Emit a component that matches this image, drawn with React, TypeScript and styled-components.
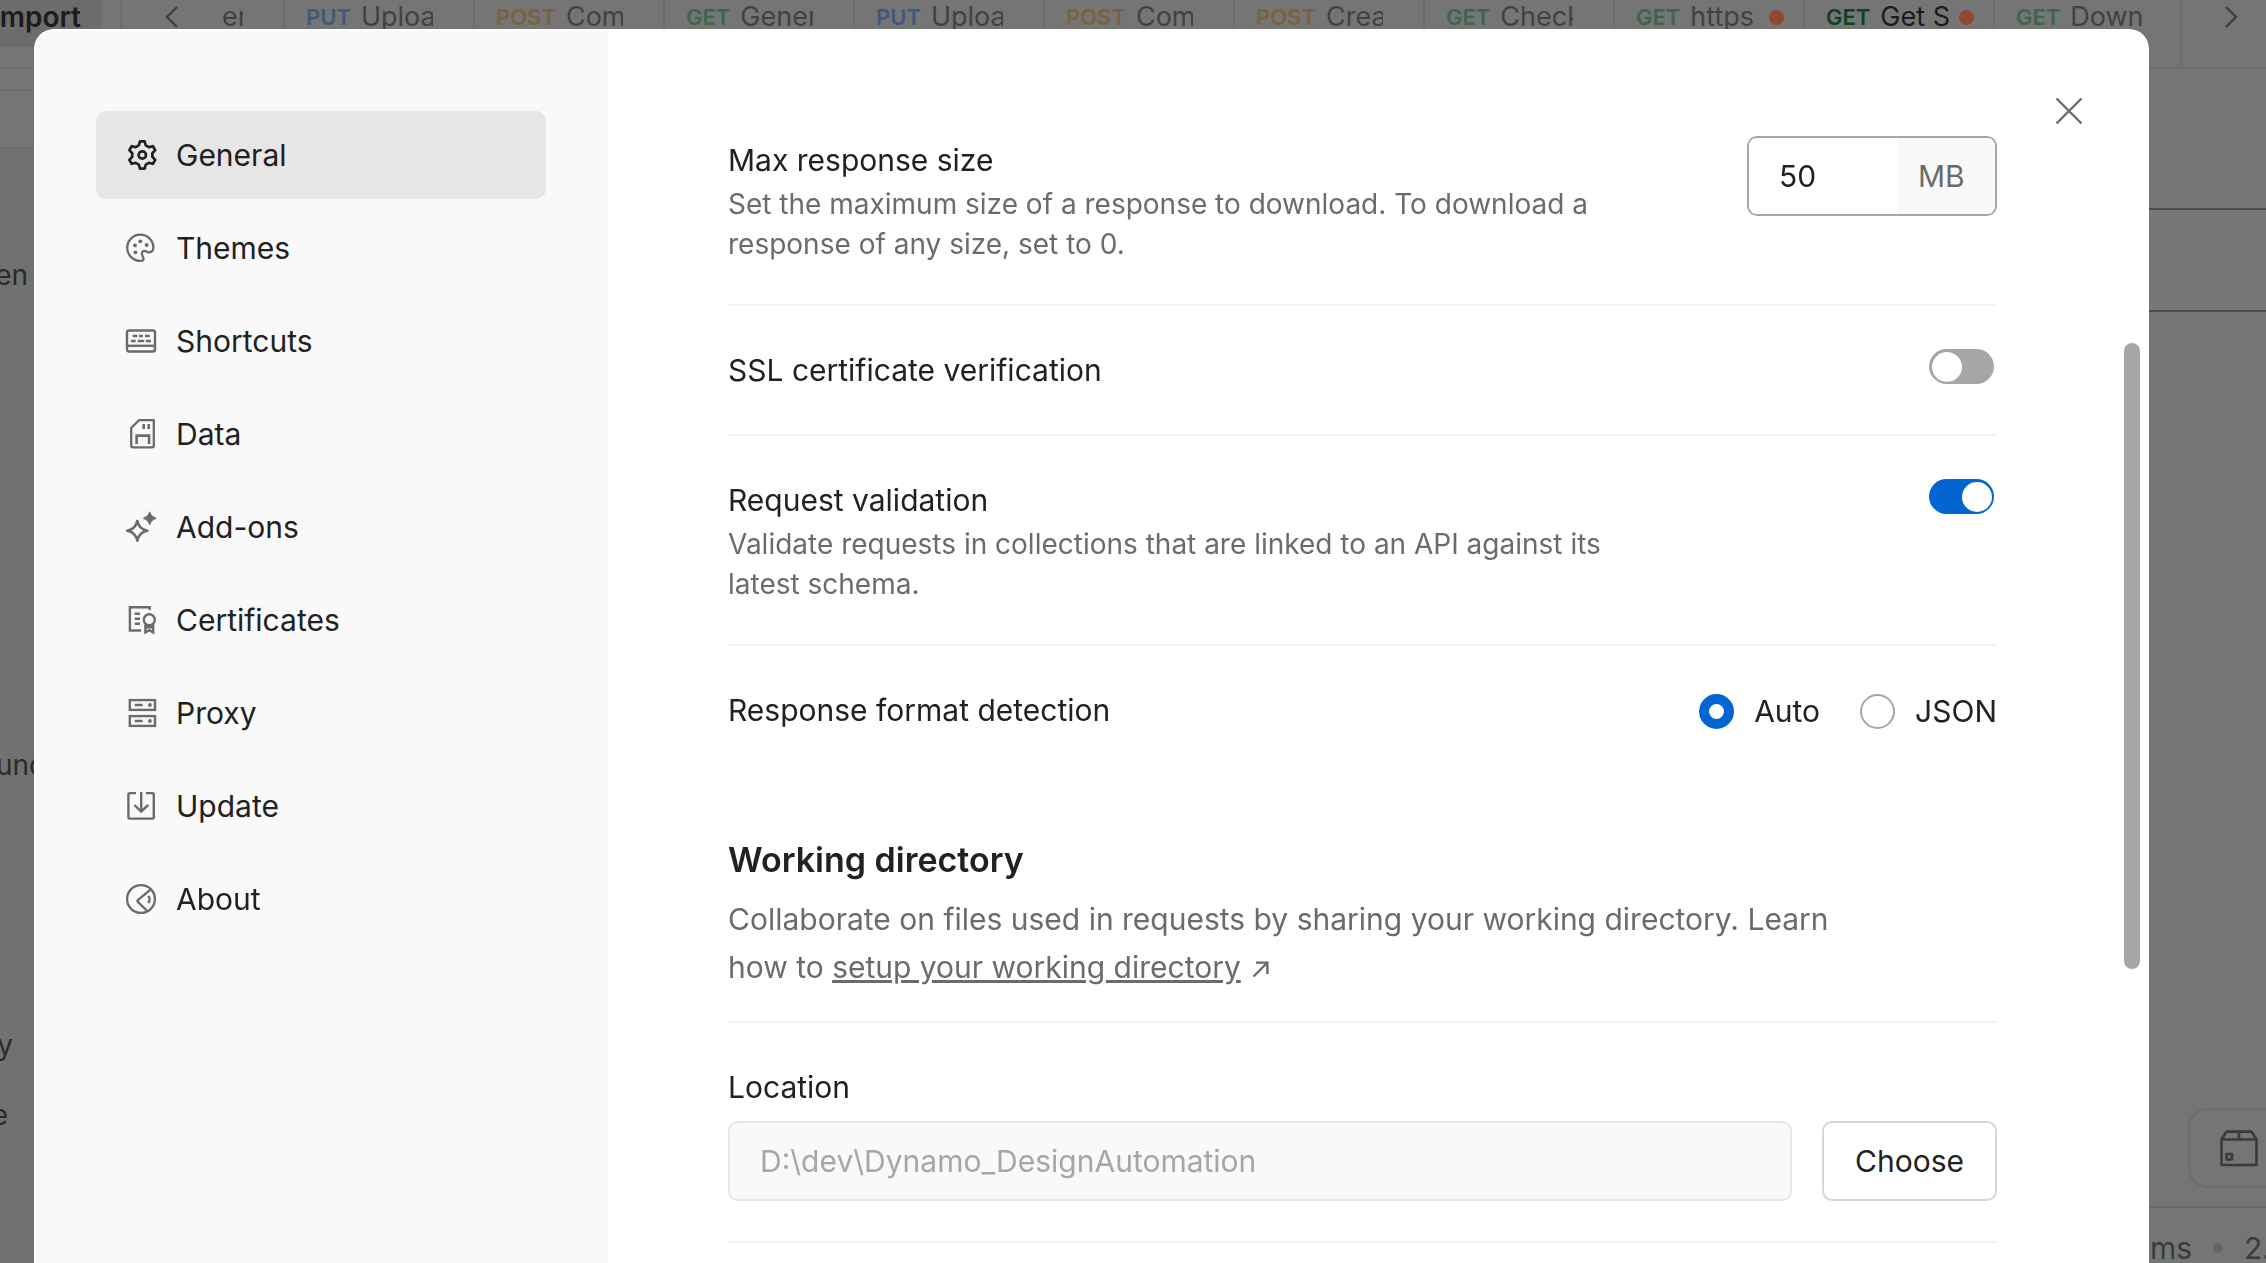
import React, { useState } from "react";
import styled, { createGlobalStyle, css } from "styled-components";

const GlobalStyle = createGlobalStyle`
  *, *::before, *::after { box-sizing: border-box; }
  html, body { margin: 0; height: 100%; overflow: hidden; }
  body, button, input {
    font-family: Inter, "Liberation Sans", sans-serif;
    font-size: 30px;
    line-height: 40px;
    color: #212121;
  }
  body { background: #757575; }
`;

/* ---------- Dimmed workspace behind the dialog ---------- */

const Workspace = styled.div`
  display: grid;
  grid-template-columns: 120px 1fr;
  height: 100vh;
  overflow: hidden;
  background: #757575;
`;

const Explorer = styled.aside`
  display: flex;
  flex-direction: column;
  overflow: hidden;
  background: #717171;
`;

const ExplorerTop = styled.div`
  height: 69px;
  border-bottom: 2px solid #6c6c6c;
  background: #757575;
`;

const ImportButton = styled.button`
  display: flex;
  justify-content: flex-end;
  align-items: flex-start;
  width: 101px;
  height: 47px;
  padding: 0 20px 0 0;
  border: 0;
  background: #6c6c6c;
  color: #1c1c1c;
  font-size: 28px;
  font-weight: 600;
  line-height: 34px;
`;

const Strip = styled.div<{ $height: number }>`
  height: ${(p) => p.$height}px;
  border-bottom: 2px solid #6c6c6c;
  background: #757575;
`;

const ExplorerItem = styled.div<{ $gap: number; $inset: number }>`
  display: flex;
  justify-content: flex-end;
  width: 60px;
  margin-top: ${(p) => p.$gap}px;
  padding-right: ${(p) => p.$inset}px;
  color: #2b2b2b;
  font-size: 28px;
  line-height: 40px;
`;

const Editor = styled.main`
  display: flex;
  flex-direction: column;
  min-width: 0;
`;

const TabBar = styled.div`
  display: flex;
  height: 69px;
  border-left: 2px solid #6c6c6c;
  border-bottom: 2px solid #6c6c6c;
`;

const ScrollButton = styled.button<{ $side: "left" | "right" }>`
  display: flex;
  align-items: flex-start;
  justify-content: center;
  flex: none;
  width: ${(p) => (p.$side === "left" ? 100 : 86)}px;
  padding: 5px 0 0 ${(p) => (p.$side === "left" ? 0 : 14)}px;
  border: 0 solid #6c6c6c;
  border-left-width: ${(p) => (p.$side === "left" ? 0 : 2)}px;
  background: transparent;
`;

const TabStrip = styled.div`
  display: flex;
  flex: 1;
  min-width: 0;
  overflow: hidden;
`;

const Tab = styled.div<{ $short?: boolean }>`
  display: flex;
  align-items: flex-start;
  flex: none;
  width: ${(p) => (p.$short ? 63 : 190)}px;
  padding: 0 40px 0 ${(p) => (p.$short ? 0 : 21)}px;
  border-right: 2px solid #6c6c6c;
  line-height: 34px;
  position: relative;
`;

const methodColors: Record<string, string> = {
  PUT: "#40587a",
  POST: "#77643b",
  GET: "#3f654d",
};

const Method = styled.span<{ $method: string; $active?: boolean }>`
  flex: none;
  margin-right: 10px;
  font-size: 22px;
  font-weight: 600;
  color: ${(p) => (p.$active ? "#0c4322" : methodColors[p.$method])};
`;

const TabName = styled.span<{ $active?: boolean }>`
  flex: 1;
  min-width: 0;
  overflow: hidden;
  white-space: nowrap;
  font-size: 27px;
  color: ${(p) => (p.$active ? "#1c1c1c" : "#424242")};
`;

const UnsavedDot = styled.i`
  position: absolute;
  right: 19px;
  top: 10px;
  width: 15px;
  height: 15px;
  border-radius: 50%;
  background: #90482f;
`;

const UrlField = styled.div`
  height: 104px;
  margin-top: 139px;
  border: solid #4d4d4d;
  border-width: 2px 0;
`;

const EditorFill = styled.div`
  flex: 1;
  display: flex;
  align-items: flex-end;
  justify-content: flex-end;
  padding-bottom: 18px;
`;

const Dock = styled.div`
  width: 78px;
  height: 80px;
  padding: 20px 0 0 30px;
  border: 2px solid #6c6c6c;
  border-right: 0;
  border-radius: 20px 0 0 20px;
`;

const StatusBar = styled.div`
  display: flex;
  align-items: center;
  justify-content: flex-end;
  gap: 21px;
  height: 57px;
  padding-top: 24px;
  border-top: 2px solid #6a6a6a;
  color: #3b3b3b;
  overflow: hidden;
`;

const StatusDot = styled.i`
  width: 10px;
  height: 10px;
  border-radius: 50%;
  background: #666;
`;

const StatusSize = styled.span`
  width: 22px;
  white-space: nowrap;
`;

/* ---------- Dialog ---------- */

const Backdrop = styled.div`
  position: fixed;
  inset: 0;
  display: flex;
  padding: 29px 117px 0 34px;
`;

const Dialog = styled.section`
  position: relative;
  display: flex;
  flex: 1;
  min-width: 0;
  padding: 2px 0 0 2px;
  border-radius: 20px 20px 0 0;
  background: #fff;
  overflow: hidden;
`;

const Sidebar = styled.nav`
  display: flex;
  flex-direction: column;
  gap: 5px;
  flex: none;
  width: 572px;
  padding: 80px 62px 0 60px;
  border-radius: 18px 0 0 0;
  background: #f9f9f9;
`;

const NavItem = styled.button<{ $active: boolean }>`
  display: flex;
  align-items: center;
  gap: 19px;
  height: 88px;
  padding: 0 29px;
  border: 0;
  border-radius: 10px;
  background: ${(p) => (p.$active ? "#e6e6e6" : "transparent")};
  text-align: left;

  svg { color: ${(p) => (p.$active ? "#212121" : "#6b6b6b")}; }
`;

const NavIcon = styled.svg.attrs({
  viewBox: "0 0 32 32",
  fill: "none",
  stroke: "currentColor",
  strokeWidth: 2.7,
  "aria-hidden": true,
})`
  flex: none;
  width: 32px;
  height: 32px;
`;

const Content = styled.div`
  flex: 1;
  min-width: 0;
  padding: 65px 152px 0 120px;
  overflow: hidden;
`;

const ScrollThumb = styled.div`
  position: absolute;
  top: 314px;
  right: 9px;
  width: 16px;
  height: 626px;
  border-radius: 8px;
  background: #a6a6a6;
`;

const CloseButton = styled.button`
  position: absolute;
  top: 62px;
  right: 60px;
  display: grid;
  place-items: center;
  width: 40px;
  height: 40px;
  padding: 0;
  border: 0;
  background: transparent;
  color: #6b6b6b;
`;

const Setting = styled.div<{ $last?: boolean }>`
  display: flex;
  justify-content: space-between;
  align-items: flex-start;
  padding: 40px 0;
  ${(p) => !p.$last && css`border-bottom: 2px solid #f2f2f2;`}
`;

const SettingText = styled.div`
  width: 880px;
  padding-top: 4px;
`;

const SettingTitle = styled.label`
  display: block;
  margin-bottom: 4px;
`;

const SettingHint = styled.p`
  margin: 0;
  color: #6b6b6b;
  font-size: 28px;
`;

const SizeField = styled.div`
  display: flex;
  width: 250px;
  height: 80px;
  border: 2px solid #a6a6a6;
  border-radius: 10px;
  overflow: hidden;
`;

const SizeInput = styled.input`
  flex: 1;
  min-width: 0;
  padding: 0 0 0 30px;
  border: 0;
  outline: 0;
  background: #fff;
`;

const SizeUnit = styled.span`
  display: flex;
  align-items: center;
  width: 97px;
  padding-left: 20px;
  background: #f9f9f9;
  color: #6b6b6b;
`;

const Toggle = styled.input.attrs({ type: "checkbox", role: "switch" })`
  appearance: none;
  display: flex;
  align-items: center;
  width: 65px;
  height: 35px;
  margin: 3px 3px 0 0;
  padding: 0 3px;
  border-radius: 18px;
  background: #a6a6a6;

  &::before {
    content: "";
    width: 30px;
    height: 30px;
    border-radius: 50%;
    background: #fff;
  }
  &:checked { background: #0265d2; justify-content: flex-end; padding: 0 2px; }
`;

const RadioGroup = styled.div`
  display: flex;
  gap: 40px;
  padding-top: 5px;
`;

const RadioLabel = styled.label`
  display: flex;
  align-items: center;
  gap: 20px;
`;

const Radio = styled.input.attrs({ type: "radio" })`
  appearance: none;
  width: 35px;
  height: 35px;
  margin: 0;
  border: 2px solid #a6a6a6;
  border-radius: 50%;
  background: #fff;

  &:checked { border: 10px solid #0265d2; }
`;

const SectionHeader = styled.header`
  margin-top: 62px;
  padding-bottom: 30px;
  border-bottom: 2px solid #f2f2f2;
`;

const SectionTitle = styled.h2`
  margin: 0 0 11px;
  font-size: 34px;
  font-weight: 600;
  line-height: 48px;
`;

const SectionHint = styled.p`
  max-width: 1140px;
  margin: 0;
  color: #6b6b6b;
  line-height: 48px;
`;

const HintLink = styled.a`
  color: inherit;
  text-decoration: underline;
`;

const ExternalIcon = styled.svg`
  width: 17px;
  height: 17px;
  margin-left: 11px;
`;

const LocationSetting = styled.div`
  padding: 44px 0 40px;
  border-bottom: 2px solid #f2f2f2;
`;

const LocationRow = styled.div`
  display: flex;
  gap: 30px;
  padding-top: 10px;
`;

const PathInput = styled.input`
  flex: 1;
  min-width: 0;
  height: 80px;
  padding: 0 30px;
  border: 2px solid #e6e6e6;
  border-radius: 10px;
  background: #f9f9f9;
  color: #a6a6a6;
`;

const ChooseButton = styled.button`
  flex: none;
  width: 175px;
  height: 80px;
  padding: 0;
  border: 2px solid #d6d6d6;
  border-radius: 10px;
  background: #fff;
`;

/* ---------- Icons ---------- */

const gearOutline = (() => {
  const cx = 17.3;
  const cy = 16;
  const corner = [[9.6, -3.5], [13.6, -2.3], [13.6, 2.3], [9.6, 3.5]];
  const points: string[] = [];
  for (let k = 0; k < 6; k++) {
    const a = (Math.PI / 3) * k - Math.PI / 2;
    corner.forEach(([r, t]) => {
      const x = cx + r * Math.cos(a) - t * Math.sin(a);
      const y = cy + r * Math.sin(a) + t * Math.cos(a);
      points.push(`${x.toFixed(2)} ${y.toFixed(2)}`);
    });
  }
  return `M${points.join("L")}Z`;
})();

const icons: Record<string, React.ReactNode> = {
  General: (
    <>
      <path d={gearOutline} strokeLinejoin="round" />
      <circle cx="17.3" cy="16" r="3.7" />
    </>
  ),
  Themes: (
    <>
      <path d="M28.4 15.5A13.1 13.1 0 1 0 15.3 28.9C18 29.1 19 28 18.3 26C17.5 24 16.3 21.6 17.2 20C18.3 18.2 20.3 18.8 22 19.8C25 21.3 28.4 19.5 28.4 15.5Z" strokeWidth="2.3" />
      <g fill="currentColor" stroke="none">
        <circle cx="15.3" cy="9.3" r="1.9" />
        <circle cx="21.6" cy="13" r="1.9" />
        <circle cx="10" cy="13.4" r="1.9" />
        <circle cx="10.4" cy="20.3" r="1.9" />
      </g>
    </>
  ),
  Shortcuts: (
    <>
      <rect x="2" y="5.5" width="28" height="21" rx="2" strokeWidth="2.4" />
      <path d="M2 20.8H30" strokeWidth="2.4" />
      <path d="M7.7 11H12.3M14 11H18M20 11H24.7M6 16H10.7M12.7 16H19.3M21 16H26" strokeWidth="2.6" />
    </>
  ),
  Data: (
    <>
      <path d="M14 2.2H28.8V27.5Q28.8 29.3 27 29.3H8Q6.2 29.3 6.2 27.5V10Z" strokeLinejoin="round" strokeWidth="2.3" />
      <path d="M18.7 6V11M23.7 6V11M11.6 26V17.6H24.1V26" strokeWidth="2.6" />
    </>
  ),
  "Add-ons": (
    <>
      <path d="M12.3 10C13.5 15.8 16.2 18.5 22.3 19.7C16.2 20.9 13.5 23.7 12.3 29.6C11.1 23.7 8.4 20.9 2.3 19.7C8.4 18.5 11.1 15.8 12.3 10Z" strokeLinejoin="round" />
      <path d="M24.7 1C25.6 5 27 6.4 31 7.3C27 8.2 25.6 9.6 24.7 13.6C23.8 9.6 22.4 8.2 18.4 7.3C22.4 6.4 23.8 5 24.7 1Z" fill="currentColor" strokeWidth="1.2" />
    </>
  ),
  Certificates: (
    <>
      <path d="M24.7 6V3.2H4.9V26.5H16M9.7 9.7H15M9.7 14.7H15M9.7 19.7H15" strokeWidth="2.4" />
      <circle cx="24.3" cy="15.7" r="5.5" strokeWidth="2.4" />
      <path d="M20.4 20.5V28.4L24.3 26.2L28.2 28.4V20.5M20.4 23.3H28.2" strokeWidth="2.4" />
    </>
  ),
  Proxy: (
    <>
      <rect x="4.8" y="3.1" width="25.2" height="9.8" strokeWidth="2.4" />
      <rect x="4.8" y="19.1" width="25.2" height="9.8" strokeWidth="2.4" />
      <path d="M9.7 8H17.7M9.7 24H17.7" strokeWidth="2.3" />
      <g fill="currentColor" stroke="none">
        <circle cx="24.9" cy="8" r="1.9" />
        <circle cx="24.9" cy="24" r="1.9" />
      </g>
    </>
  ),
  Update: (
    <path d="M11 3.1H5Q3.4 3.1 3.4 4.7V27Q3.4 28.6 5 28.6H27.2Q28.8 28.6 28.8 27V4.7Q28.8 3.1 27.2 3.1H21M16.2 2V21.5M9.4 15L16.2 21.5L23.2 15" strokeWidth="2.4" />
  ),
  About: (
    <>
      <circle cx="16" cy="16" r="13.9" strokeWidth="2.3" />
      <path d="M26 6.2L12.6 17.4Q12 18 12.6 18.7L22.3 28M23.2 13Q26.2 16.2 23.2 20" strokeWidth="2.3" />
    </>
  ),
};

const sections = Object.keys(icons);

const tabs = [
  { method: "PUT", name: "Uploa" },
  { method: "POST", name: "Com" },
  { method: "GET", name: "Gener" },
  { method: "PUT", name: "Uploa" },
  { method: "POST", name: "Com" },
  { method: "POST", name: "Crea" },
  { method: "GET", name: "Check" },
  { method: "GET", name: "https", unsaved: true },
  { method: "GET", name: "Get S", unsaved: true, active: true },
  { method: "GET", name: "Down" },
];

const Chevron = ({ left }: { left?: boolean }) => (
  <svg width="16" height="24" viewBox="0 0 16 24" fill="none" stroke="#3f3f3f" strokeWidth="2.4" aria-hidden>
    <path d={left ? "M13 2L3 12L13 22" : "M3 2L13 12L3 22"} />
  </svg>
);

function WorkspaceView() {
  return (
    <Workspace>
      <Explorer>
        <ExplorerTop>
          <ImportButton>Import</ImportButton>
        </ExplorerTop>
        <Strip $height={22} />
        <Strip $height={58} />
        <ExplorerItem $gap={106} $inset={32}>en</ExplorerItem>
        <ExplorerItem $gap={450} $inset={15}>unc</ExplorerItem>
        <ExplorerItem $gap={240} $inset={47}>y</ExplorerItem>
        <ExplorerItem $gap={30} $inset={52}>e</ExplorerItem>
      </Explorer>
      <Editor>
        <TabBar>
          <ScrollButton $side="left" aria-label="Scroll tabs left"><Chevron left /></ScrollButton>
          <TabStrip>
            <Tab $short><TabName>er</TabName></Tab>
            {tabs.map((tab, i) => (
              <Tab key={i}>
                <Method $method={tab.method} $active={tab.active}>{tab.method}</Method>
                <TabName $active={tab.active}>{tab.name}</TabName>
                {tab.unsaved && <UnsavedDot />}
              </Tab>
            ))}
          </TabStrip>
          <ScrollButton $side="right" aria-label="Scroll tabs right"><Chevron /></ScrollButton>
        </TabBar>
        <UrlField />
        <EditorFill>
          <Dock>
            <svg width="38" height="38" viewBox="0 0 38 38" fill="none" stroke="#3b3b3b" strokeWidth="2.6" strokeLinejoin="round" aria-hidden>
              <path d="M1.5 9.5L6.5 1.6H31.5L36.5 9.5V35H1.5ZM1.5 9.5H36.5M19 1.6V9.5M6.5 24H12V29.5H6.5Z" />
            </svg>
          </Dock>
        </EditorFill>
        <StatusBar>
          <span>ms</span>
          <StatusDot />
          <StatusSize>2.</StatusSize>
        </StatusBar>
      </Editor>
    </Workspace>
  );
}

export default function App() {
  const [section, setSection] = useState("General");
  const [maxSize, setMaxSize] = useState("50");
  const [ssl, setSsl] = useState(false);
  const [validate, setValidate] = useState(true);
  const [format, setFormat] = useState("Auto");

  return (
    <>
      <GlobalStyle />
      <WorkspaceView />
      <Backdrop>
        <Dialog role="dialog" aria-label="Settings">
          <Sidebar>
            {sections.map((name) => (
              <NavItem key={name} $active={name === section} onClick={() => setSection(name)}>
                <NavIcon>{icons[name]}</NavIcon>
                {name}
              </NavItem>
            ))}
          </Sidebar>
          <Content>
            <Setting>
              <SettingText>
                <SettingTitle htmlFor="max-size">Max response size</SettingTitle>
                <SettingHint>
                  Set the maximum size of a response to download. To download a response of any size, set to 0.
                </SettingHint>
              </SettingText>
              <SizeField>
                <SizeInput id="max-size" value={maxSize} onChange={(e) => setMaxSize(e.target.value)} />
                <SizeUnit>MB</SizeUnit>
              </SizeField>
            </Setting>
            <Setting>
              <SettingText>
                <SettingTitle htmlFor="ssl">SSL certificate verification</SettingTitle>
              </SettingText>
              <Toggle id="ssl" checked={ssl} onChange={() => setSsl(!ssl)} />
            </Setting>
            <Setting>
              <SettingText>
                <SettingTitle htmlFor="validation">Request validation</SettingTitle>
                <SettingHint>
                  Validate requests in collections that are linked to an API against its latest schema.
                </SettingHint>
              </SettingText>
              <Toggle id="validation" checked={validate} onChange={() => setValidate(!validate)} />
            </Setting>
            <Setting $last>
              <SettingText>
                <SettingTitle as="div" id="format-title">Response format detection</SettingTitle>
              </SettingText>
              <RadioGroup role="radiogroup" aria-labelledby="format-title">
                {["Auto", "JSON"].map((name) => (
                  <RadioLabel key={name}>
                    <Radio name="format" checked={format === name} onChange={() => setFormat(name)} />
                    {name}
                  </RadioLabel>
                ))}
              </RadioGroup>
            </Setting>
            <SectionHeader>
              <SectionTitle>Working directory</SectionTitle>
              <SectionHint>
                Collaborate on files used in requests by sharing your working directory. Learn how to{" "}
                <HintLink href="#working-directory">setup your working directory</HintLink>
                <ExternalIcon viewBox="0 0 17 17" fill="none" stroke="currentColor" strokeWidth="2.4" aria-hidden>
                  <path d="M1.5 15.5L15 2M4 1.6H15.4V13" />
                </ExternalIcon>
              </SectionHint>
            </SectionHeader>
            <LocationSetting>
              <SettingTitle htmlFor="location">Location</SettingTitle>
              <LocationRow>
                <PathInput id="location" value="D:\dev\Dynamo_DesignAutomation" disabled readOnly />
                <ChooseButton>Choose</ChooseButton>
              </LocationRow>
            </LocationSetting>
          </Content>
          <CloseButton aria-label="Close settings">
            <svg width="28" height="28" viewBox="0 0 28 28" fill="none" stroke="currentColor" strokeWidth="2.4" aria-hidden>
              <path d="M1.5 1.5L26.5 26.5M26.5 1.5L1.5 26.5" />
            </svg>
          </CloseButton>
          <ScrollThumb />
        </Dialog>
      </Backdrop>
    </>
  );
}
